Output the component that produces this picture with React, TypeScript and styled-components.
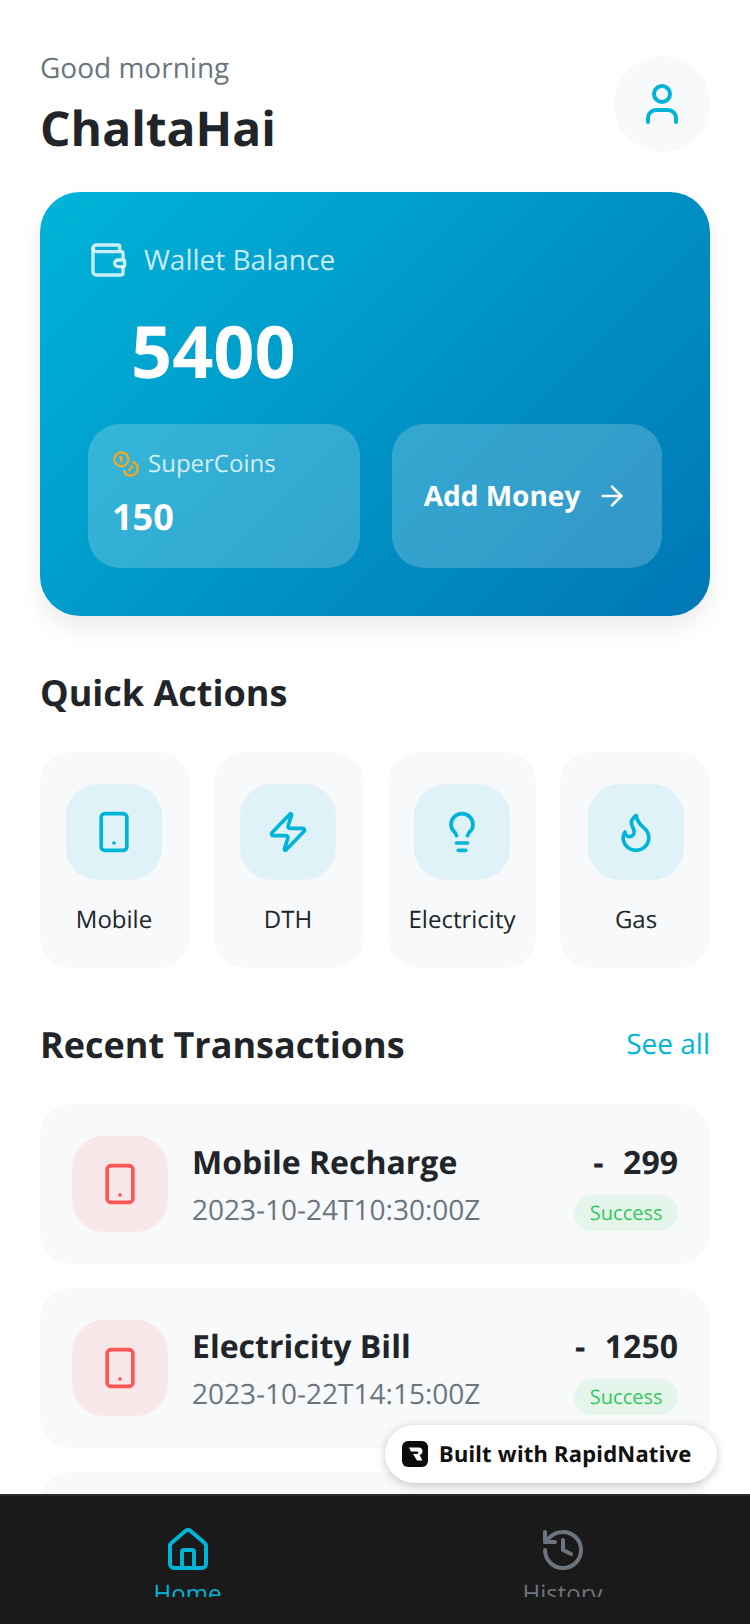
import React from "react";
import styled, { createGlobalStyle } from "styled-components";
import { ArrowRight, Coins, Flame, History, House, Lightbulb, Smartphone, User, Wallet, Zap } from "lucide-react";

const Global = createGlobalStyle`
  * { box-sizing: border-box; }
  html, body { margin: 0; padding: 0; background: #fff; }
  body { font-family: "Open Sans", "Noto Sans", sans-serif; text-rendering: geometricPrecision; }
  svg { flex: none; }
`;

const Screen = styled.div`
  position: relative;
  width: 750px;
  height: 1624px;
  display: flex;
  flex-direction: column;
  overflow: hidden;
  background: #fff;
`;
const Scroll = styled.main`
  flex: 1;
  min-height: 0;
  overflow: hidden;
  padding: 56px 40px 0;
`;
const Header = styled.header`
  display: flex;
  justify-content: space-between;
  align-items: center;
  height: 96px;
`;
const Greeting = styled.div`
  font-size: 28px;
  line-height: 38px;
  margin-top: 2px;
  color: #6c757d;
`;
const Name = styled.h1`
  margin: 10px 0 0;
  font-size: 48px;
  line-height: 64px;
  font-weight: 700;
  color: #212529;
`;
const Avatar = styled.div`
  width: 96px;
  height: 96px;
  border-radius: 50%;
  background: #f8f9fa;
  color: #00b4d8;
  display: flex;
  align-items: center;
  justify-content: center;
`;
const WalletCard = styled.section`
  margin-top: 40px;
  height: 424px;
  padding: 48px;
  border-radius: 40px;
  background: linear-gradient(135deg, #00b4d8 0%, #0077b6 100%);
  box-shadow: 0 12px 24px rgba(0, 0, 0, 0.08);
  display: flex;
  flex-direction: column;
`;
const WalletHead = styled.div`
  display: flex;
  align-items: center;
  gap: 16px;
  height: 40px;
  color: rgba(255, 255, 255, 0.8);
  font-size: 28px;
  line-height: 38px;
`;
const Balance = styled.div`
  margin: 23px 0 0 43px;
  font-size: 72px;
  line-height: 96px;
  font-weight: 700;
  color: #fff;
`;
const WalletRow = styled.div`
  margin-top: auto;
  display: grid;
  grid-template-columns: 272px 270px;
  gap: 32px;
`;
const Tile = styled.div`
  height: 144px;
  border-radius: 32px;
  background: rgba(255, 255, 255, 0.2);
`;
const CoinsTile = styled(Tile)`
  padding: 23px 24px 0;
`;
const CoinsHead = styled.div`
  display: flex;
  align-items: center;
  gap: 8px;
  height: 32px;
  font-size: 24px;
  color: rgba(255, 255, 255, 0.8);
  svg { color: #f5a623; margin-top: 2px; }
`;
const CoinsValue = styled.div`
  margin-top: 14px;
  font-size: 36px;
  line-height: 48px;
  font-weight: 700;
  color: #fff;
`;
const AddMoney = styled(Tile)`
  display: flex;
  align-items: center;
  justify-content: center;
  gap: 16px;
  padding-right: 2px;
  color: #fff;
  font-size: 28px;
  font-weight: 700;
`;
const SectionRow = styled.div<{ $top: number }>`
  margin-top: ${(p) => p.$top}px;
  display: flex;
  justify-content: space-between;
  align-items: center;
  height: 48px;
`;
const SectionTitle = styled.h2`
  margin: 0;
  font-size: 36px;
  font-weight: 700;
  color: #212529;
`;
const SeeAll = styled.span`
  font-size: 28px;
  color: #00b4d8;
`;
const Actions = styled.div`
  margin-top: 36px;
  display: grid;
  grid-template-columns: 150px 150px 148px 150px;
  gap: 24px;
`;
const Action = styled.div`
  height: 216px;
  border-radius: 32px;
  background: #f8f9fa;
  padding-top: 32px;
  display: flex;
  flex-direction: column;
  align-items: center;
  &:nth-child(-n + 2) { padding-right: 2px; }
  &:nth-child(4) { padding-left: 2px; }
`;
const IconBox = styled.div<{ $tone: "cyan" | "red" }>`
  width: 96px;
  height: 96px;
  flex: none;
  border-radius: 32px;
  display: flex;
  align-items: center;
  justify-content: center;
  background: ${(p) => (p.$tone === "cyan" ? "#dff2f8" : "#f8e7e8")};
  color: ${(p) => (p.$tone === "cyan" ? "#00b4d8" : "#ff5555")};
`;
const ActionLabel = styled.div`
  margin-top: 24px;
  font-size: 24px;
  line-height: 32px;
  color: #212529;
`;
const TxList = styled.div`
  margin-top: 36px;
  display: flex;
  flex-direction: column;
  gap: 24px;
`;
const TxCard = styled.article`
  height: 160px;
  flex: none;
  border-radius: 32px;
  background: #f8f9fa;
  padding: 32px;
  display: flex;
  align-items: center;
  gap: 24px;
`;
const TxBody = styled.div`
  flex: 1;
  min-width: 0;
`;
const TxTitle = styled.div`
  font-size: 32px;
  line-height: 44px;
  margin-top: 2px;
  font-weight: 700;
  color: #212529;
`;
const TxDate = styled.div`
  margin-top: 6px;
  font-size: 28px;
  line-height: 38px;
  color: #6c757d;
`;
const TxSide = styled.div`
  display: flex;
  flex-direction: column;
  align-items: flex-end;
  gap: 10px;
  margin-top: 3px;
`;
const TxAmount = styled.div`
  font-size: 32px;
  line-height: 44px;
  font-weight: 700;
  color: #212529;
  white-space: pre;
  word-spacing: 1.500px;
`;
const Status = styled.div`
  height: 36px;
  padding: 0 15.500px;
  border-radius: 18px;
  background: #e6f5ec;
  color: #34c759;
  font-size: 20px;
  line-height: 36px;
`;
const TabBar = styled.nav`
  height: 130px;
  flex: none;
  background: #1a1a1a;
  border-top: 2px solid #2a2a2a;
  display: flex;
`;
const Tab = styled.div<{ $active?: boolean }>`
  flex: 1;
  height: 101px;
  padding-top: 30px;
  overflow: hidden;
  display: flex;
  flex-direction: column;
  align-items: center;
  color: ${(p) => (p.$active ? "#00b4d8" : "#6c757d")};
`;
const TabLabel = styled.div`
  margin-top: 4px;
  font-size: 24px;
  line-height: 32px;
`;
const Badge = styled.div`
  position: absolute;
  left: 385px;
  top: 1425px;
  width: 332px;
  height: 58px;
  border-radius: 29px;
  background: #fff;
  box-shadow: 0 2px 10px rgba(0, 0, 0, 0.22);
  display: flex;
  align-items: center;
  padding-left: 17px;
  gap: 11px;
  font-family: "Noto Sans", sans-serif;
  font-size: 22px;
  font-weight: 700;
  color: #111;
  letter-spacing: 0.25px;
`;

const Logo = () => (
  <svg width="26" height="26" viewBox="0 0 26 26" aria-hidden="true">
    <rect width="26" height="26" rx="6" fill="#0c0c0c" />
    <path d="M7 6.500h9.500c3 0 4 2 4 3.800 0 2-1.200 3.200-3 3.700l3 5.500h-5.500l-4-6.500h4.200c.8 0 1.200-.5 1.200-1.200s-.4-1.300-1.200-1.300H9z" fill="#fff" />
  </svg>
);

const actions = [
  { label: "Mobile", Icon: Smartphone },
  { label: "DTH", Icon: Zap },
  { label: "Electricity", Icon: Lightbulb },
  { label: "Gas", Icon: Flame },
];
const txs = [
  { title: "Mobile Recharge", date: "2023-10-24T10:30:00Z", amount: "-  299" },
  { title: "Electricity Bill", date: "2023-10-22T14:15:00Z", amount: "-  1250" },
  { title: "Gas Bill", date: "2023-10-20T09:00:00Z", amount: "-  850" },
];

export default function App() {
  return (
    <Screen>
      <Global />
      <Scroll>
        <Header>
          <div>
            <Greeting>Good morning</Greeting>
            <Name>ChaltaHai</Name>
          </div>
          <Avatar>
            <User size={48} />
          </Avatar>
        </Header>
        <WalletCard>
          <WalletHead>
            <Wallet size={40} />
            Wallet Balance
          </WalletHead>
          <Balance>5400</Balance>
          <WalletRow>
            <CoinsTile>
              <CoinsHead>
                <Coins size={28} />
                SuperCoins
              </CoinsHead>
              <CoinsValue>150</CoinsValue>
            </CoinsTile>
            <AddMoney>
              Add Money
              <ArrowRight size={32} />
            </AddMoney>
          </WalletRow>
        </WalletCard>
        <SectionRow $top={52}>
          <SectionTitle>Quick Actions</SectionTitle>
        </SectionRow>
        <Actions>
          {actions.map(({ label, Icon }) => (
            <Action key={label}>
              <IconBox $tone="cyan">
                <Icon size={44} />
              </IconBox>
              <ActionLabel>{label}</ActionLabel>
            </Action>
          ))}
        </Actions>
        <SectionRow $top={52}>
          <SectionTitle>Recent Transactions</SectionTitle>
          <SeeAll>See all</SeeAll>
        </SectionRow>
        <TxList>
          {txs.map((t) => (
            <TxCard key={t.title}>
              <IconBox $tone="red">
                <Smartphone size={44} />
              </IconBox>
              <TxBody>
                <TxTitle>{t.title}</TxTitle>
                <TxDate>{t.date}</TxDate>
              </TxBody>
              <TxSide>
                <TxAmount>{t.amount}</TxAmount>
                <Status>Success</Status>
              </TxSide>
            </TxCard>
          ))}
        </TxList>
      </Scroll>
      <TabBar>
        <Tab $active>
          <House size={48} />
          <TabLabel>Home</TabLabel>
        </Tab>
        <Tab>
          <History size={48} />
          <TabLabel>History</TabLabel>
        </Tab>
      </TabBar>
      <Badge>
        <Logo />
        Built with RapidNative
      </Badge>
    </Screen>
  );
}
